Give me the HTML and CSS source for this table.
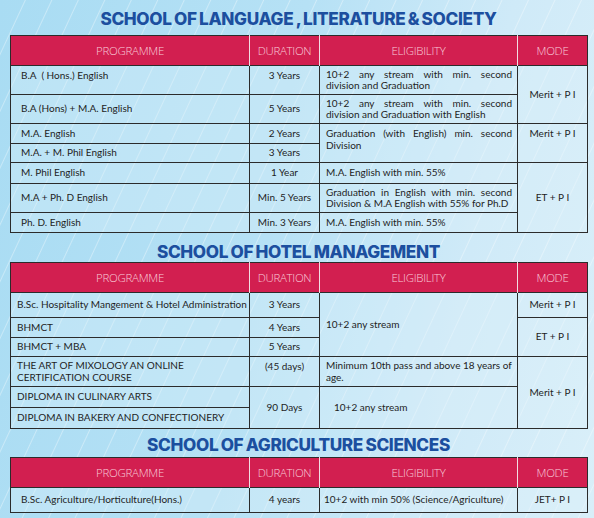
FILE: index.html
```html
<!DOCTYPE html>
<html>
<head>
<meta charset="utf-8">
<link rel="stylesheet" href="styles.css">
</head>
<body>
<div class="page">
  <h2 class="title t1">SCHOOL OF LANGUAGE , LITERATURE &amp; SOCIETY</h2>
  <table class="prog">
    <colgroup><col class="c1"><col class="c2"><col class="c3"><col class="c4"></colgroup>
    <thead><tr class="hd"><th>PROGRAMME</th><th>DURATION</th><th>ELIGIBILITY</th><th>MODE</th></tr></thead>
    <tbody>
      <tr class="h29"><td class="p top">B.A&nbsp; ( Hons.) English</td><td class="d top">3 Years</td><td class="e"><span class="j">10+2 any stream with min. second</span>division and Graduation</td><td class="m" rowspan="2">Merit + P I</td></tr>
      <tr class="h29"><td class="p">B.A (Hons) + M.A. English</td><td class="d">5 Years</td><td class="e"><span class="j">10+2 any stream with min. second</span>division and Graduation with English</td></tr>
      <tr class="h20"><td class="p">M.A. English</td><td class="d">2 Years</td><td class="e top" rowspan="2"><span class="j">Graduation (with English) min. second</span>Division</td><td class="m top" rowspan="2">Merit + P I</td></tr>
      <tr class="h19"><td class="p">M.A. + M. Phil English</td><td class="d">3 Years</td></tr>
      <tr class="h21"><td class="p">M. Phil English</td><td class="d">1 Year</td><td class="e">M.A. English with min. 55%</td><td class="m" rowspan="3">ET + P I</td></tr>
      <tr class="h29"><td class="p">M.A + Ph. D English</td><td class="d">Min. 5 Years</td><td class="e"><span class="j">Graduation in English with min. second</span>Division &amp; M.A English with 55% for Ph.D</td></tr>
      <tr class="h20"><td class="p">Ph. D. English</td><td class="d">Min. 3 Years</td><td class="e">M.A. English with min. 55%</td></tr>
    </tbody>
  </table>

  <h2 class="title t2">SCHOOL OF HOTEL MANAGEMENT</h2>
  <table class="prog">
    <colgroup><col class="c1"><col class="c2"><col class="c3"><col class="c4"></colgroup>
    <thead><tr class="hd"><th>PROGRAMME</th><th>DURATION</th><th>ELIGIBILITY</th><th>MODE</th></tr></thead>
    <tbody>
      <tr class="h25"><td class="p p2">B.Sc. Hospitality Mangement &amp; Hotel Administration</td><td class="d">3 Years</td><td class="e" rowspan="3">10+2 any stream</td><td class="m">Merit + P I</td></tr>
      <tr class="h20"><td class="p p2">BHMCT</td><td class="d">4 Years</td><td class="m" rowspan="2">ET + P I</td></tr>
      <tr class="h19"><td class="p p2">BHMCT + MBA</td><td class="d">5 Years</td></tr>
      <tr class="h30"><td class="p p2">THE ART OF MIXOLOGY AN ONLINE<br>CERTIFICATION COURSE</td><td class="d top">(45 days)</td><td class="e">Minimum 10th pass and above 18 years of age.</td><td class="m" rowspan="3">Merit + P I</td></tr>
      <tr class="h21"><td class="p p2">DIPLOMA IN CULINARY ARTS</td><td class="d" rowspan="2">90 Days</td><td class="e ind" rowspan="2">10+2 any stream</td></tr>
      <tr class="h21"><td class="p p2">DIPLOMA IN BAKERY AND CONFECTIONERY</td></tr>
    </tbody>
  </table>

  <h2 class="title t3">SCHOOL OF AGRICULTURE SCIENCES</h2>
  <table class="prog">
    <colgroup><col class="c1"><col class="c2"><col class="c3"><col class="c4"></colgroup>
    <thead><tr class="hd"><th>PROGRAMME</th><th>DURATION</th><th>ELIGIBILITY</th><th>MODE</th></tr></thead>
    <tbody>
      <tr class="h25"><td class="p">B.Sc. Agriculture/Horticulture(Hons.)</td><td class="d">4 years</td><td class="e e3">10+2 with min 50% (Science/Agriculture)</td><td class="m">JET+ P I</td></tr>
    </tbody>
  </table>
</div>
</body>
</html>
```
FILE: styles.css
```css
html, body {
  margin: 0;
  padding: 0;
}
body {
  width: 594px;
  height: 518px;
  overflow: hidden;
  background:
    repeating-linear-gradient(115deg, rgba(255,255,255,0) 0px, rgba(255,255,255,0) 22px, rgba(255,255,255,0.35) 23px, rgba(255,255,255,0) 24px),
    linear-gradient(100deg, #a9dcf3 0%, #b6e1f5 45%, #cfeaf8 75%, #d9eff9 100%);
  font-family: Lato, "Liberation Sans", sans-serif;
  color: #1e1e1e;
}
.page {
  padding: 0 7px 0 10px;
}
.title {
  margin: 0;
  font-family: Inter, "Liberation Sans", sans-serif;
  font-weight: 800;
  font-size: 17.2px;
  line-height: 17px;
  letter-spacing: -0.35px;
  word-spacing: -1px;
  color: #1c4f9f;
  text-align: center;
}
.t1 { padding: 10px 0 8px; }
.t2 { padding: 10px 0 2px; }
.t3 { padding: 7px 0 4px; }

.prog {
  width: 577px;
  border-collapse: collapse;
  table-layout: fixed;
  border: 1px solid #2b2b2b;
}
.c1 { width: 239px; }
.c2 { width: 70px; }
.c3 { width: 198px; }
.c4 { width: 70px; }

.hd { height: 30px; }
.hd th {
  background: #d21f50;
  color: #f8cbd8;
  font-family: "Open Sans", Lato, sans-serif;
  font-weight: 300;
  font-size: 11.5px;
  letter-spacing: -0.3px;
  border-left: 1px solid #f2dde3;
  padding: 0;
}
.hd th:first-child { border-left: none; }

.prog td {
  border: 1px solid #2b2b2b;
  background: rgba(220, 240, 250, 0.35);
  font-size: 10px;
  line-height: 11.5px;
  padding: 0;
  vertical-align: middle;
}
.prog td.top { vertical-align: top; padding-top: 4px; }
.p { padding-left: 10px !important; }
.p2 { padding-left: 6px !important; }
.d { text-align: center; }
.e { padding: 0 5px 0 6px !important; }
.e.top { padding-top: 4px !important; }
.e.ind { padding-left: 14px !important; }
.e3 { padding-left: 4px !important; }
.m { text-align: center; }
.j {
  display: block;
  text-align: justify;
  text-align-last: justify;
}

.h19 { height: 19px; }
.h20 { height: 20px; }
.h21 { height: 21px; }
.h25 { height: 25px; }
.h29 { height: 29px; }
.h30 { height: 30px; }
```
